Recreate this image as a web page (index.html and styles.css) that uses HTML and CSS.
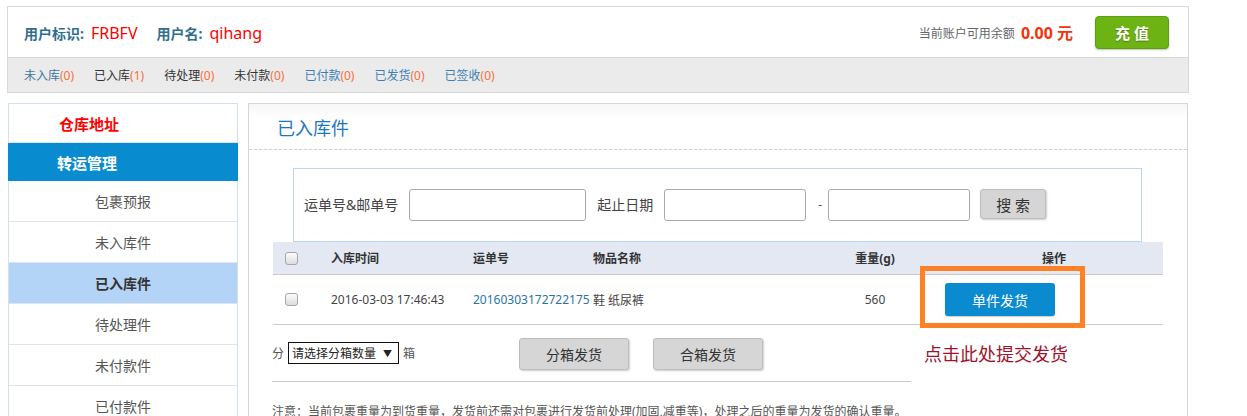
FILE: index.html
```html
<!DOCTYPE html>
<html lang="zh-CN">
<head>
<meta charset="utf-8">
<title>已入库件</title>
<link rel="stylesheet" href="styles.css">
</head>
<body>
<div class="page">
  <header class="account">
    <div class="account-top">
      <div class="user">
        <span class="lbl">用户标识:</span><span class="val">FRBFV</span>
        <span class="lbl lbl2">用户名:</span><span class="val">qihang</span>
      </div>
      <div class="balance">
        <span class="bal-lbl">当前账户可用余额</span>
        <span class="bal-val">0.00 元</span>
        <button class="recharge">充 值</button>
      </div>
    </div>
    <nav class="status-nav">
      <a class="st st-teal">未入库<em>(0)</em></a>
      <a class="st st-dark">已入库<em>(1)</em></a>
      <a class="st st-dark">待处理<em>(0)</em></a>
      <a class="st st-dark">未付款<em>(0)</em></a>
      <a class="st st-blue">已付款<em>(0)</em></a>
      <a class="st st-blue">已发货<em>(0)</em></a>
      <a class="st st-blue">已签收<em>(0)</em></a>
    </nav>
  </header>

  <div class="body">
    <aside class="side">
      <div class="side-title">仓库地址</div>
      <div class="side-group">转运管理</div>
      <div class="side-item">包裹预报</div>
      <div class="side-item">未入库件</div>
      <div class="side-item active">已入库件</div>
      <div class="side-item">待处理件</div>
      <div class="side-item">未付款件</div>
      <div class="side-item">已付款件</div>
    </aside>

    <main class="panel">
      <h2 class="panel-title">已入库件</h2>
      <div class="panel-body">
        <div class="search">
          <span class="s-lbl">运单号&amp;邮单号</span>
          <input class="s-input s-wide" type="text">
          <span class="s-lbl">起止日期</span>
          <input class="s-input s-date" type="text">
          <span class="s-dash">-</span>
          <input class="s-input s-date" type="text">
          <button class="s-btn">搜 索</button>
        </div>

        <div class="grid grid-head">
          <div class="c1"><input type="checkbox" class="cb"></div>
          <div>入库时间</div>
          <div>运单号</div>
          <div>物品名称</div>
          <div class="c5">重量(g)</div>
          <div class="c6h">操作</div>
        </div>
        <div class="grid grid-row">
          <div class="c1"><input type="checkbox" class="cb"></div>
          <div>2016-03-03 17:46:43</div>
          <div class="track">20160303172722175</div>
          <div>鞋 纸尿裤</div>
          <div class="c5">560</div>
          <div class="c6"><button class="ship-btn">单件发货</button></div>
        </div>

        <div class="ops">
          <span class="ops-txt">分</span>
          <span class="sel-wrap"><select class="sel"><option>请选择分箱数量</option></select></span>
          <span class="ops-txt">箱</span>
          <button class="ops-btn ops-first">分箱发货</button>
          <button class="ops-btn">合箱发货</button>
        </div>

        <p class="note">注意：当前包裹重量为到货重量，发货前还需对包裹进行发货前处理(加固,减重等)，处理之后的重量为发货的确认重量。</p>
      </div>

      <div class="mark-box"></div>
      <div class="mark-text">点击此处提交发货</div>
    </main>
  </div>
</div>
</body>
</html>
```

FILE: styles.css
```css
* { box-sizing: border-box; }

html, body {
  margin: 0;
  padding: 0;
  background: #fff;
}

body {
  font-family: "Noto Sans", "Noto Sans CJK SC", sans-serif;
  font-size: 12px;
  color: #333;
  overflow: hidden;
}

.page {
  width: 1189px;
  padding: 6px 0 0 7px;
}

/* ---------- account header ---------- */
.account {
  border: 1px solid #d8d8d8;
}

.account-top {
  height: 50px;
  display: flex;
  align-items: center;
  justify-content: space-between;
  padding: 0 19px 0 16px;
}

.user {
  display: flex;
  align-items: center;
  margin-top: 2px;
}

.lbl {
  font-size: 14px;
  font-weight: bold;
  color: #2f6f8e;
  margin-right: 7px;
}

.lbl2 { margin-left: 19px; }

.val {
  font-size: 16px;
  color: #f00;
}

.balance {
  display: flex;
  align-items: center;
}

.bal-lbl {
  font-size: 12px;
  color: #666;
  margin-top: 2px;
}

.bal-val {
  font-size: 16px;
  font-weight: bold;
  color: #f7300a;
  margin-left: 6px;
  margin-right: 22px;
}

.recharge {
  width: 74px;
  height: 33px;
  margin-top: 1px;
  background: #6cb313;
  border: 1px solid #5d9e10;
  border-radius: 4px;
  box-shadow: 0 1px 2px rgba(0, 0, 0, 0.25);
  color: #fff;
  font-family: inherit;
  font-size: 15px;
  font-weight: bold;
  text-shadow: 0 1px 1px rgba(0, 0, 0, 0.3);
  padding: 0;
}

.status-nav {
  height: 35px;
  border-top: 1px solid #d8d8d8;
  background: #ebebeb;
  display: flex;
  align-items: center;
  gap: 20px;
  padding-left: 16px;
}

.st {
  font-size: 12px;
}

.st em {
  font-style: normal;
  color: #f7703a;
}

.st-teal { color: #3a7c9c; }
.st-dark { color: #333; }
.st-blue { color: #3b80b2; }

/* ---------- body ---------- */
.body {
  display: flex;
  align-items: flex-start;
  margin-top: 10px;
}

.side {
  width: 230px;
  margin-left: 1px;
  border: 1px solid #d3e1ee;
  border-bottom: none;
}

.side-title {
  height: 39px;
  padding-left: 50px;
  display: flex;
  align-items: center;
  font-size: 15px;
  font-weight: bold;
  color: #f00;
  border-bottom: 1px solid #dde5ec;
}

.side-group {
  height: 38px;
  margin: 0 -1px;
  padding-left: 49px;
  display: flex;
  align-items: center;
  background: #088bcf;
  color: #fff;
  font-size: 15px;
  font-weight: bold;
}

.side-item {
  height: 41px;
  padding-left: 86px;
  display: flex;
  align-items: center;
  font-size: 14px;
  color: #555;
  border-bottom: 1px solid #dde5ec;
}

.side-item.active {
  background: #b3d4f6;
  color: #333;
  font-weight: bold;
}

/* ---------- main panel ---------- */
.panel {
  position: relative;
  width: 940px;
  margin-left: 10px;
  border: 1px solid #d6d6d6;
  border-bottom: none;
  min-height: 320px;
}

.panel-title {
  margin: 0;
  height: 46px;
  padding: 0 0 0 28px;
  display: flex;
  align-items: center;
  font-size: 18px;
  font-weight: normal;
  color: #1d77bf;
  border-bottom: 1px dashed #cfcfcf;
  background: linear-gradient(#f6f6f6, #fff 14px);
}

.panel-body {
  padding: 18px 24px 0;
}

.search {
  height: 74px;
  margin: 0 21px 0 20px;
  border: 1px solid #b9d7ef;
  display: flex;
  align-items: flex-start;
  padding: 20px 0 0 10px;
}

.s-lbl {
  font-size: 14px;
  color: #444;
  line-height: 32px;
  margin-right: 11px;
}

.s-input {
  height: 32px;
  border: 1px solid #aaa;
  border-radius: 3px;
  background: #fff;
  margin: 0 11px 0 0;
  padding: 0 4px;
}

.s-wide { width: 177px; }
.s-date { width: 142px; }

.s-dash {
  line-height: 32px;
  color: #555;
  margin: 0 6px 0 1px;
}

.s-btn {
  width: 66px;
  height: 30px;
  margin-left: -1px;
  background: #d5d5d5;
  border: 1px solid #bdbdbd;
  border-radius: 3px;
  box-shadow: 1px 1px 2px rgba(0, 0, 0, 0.2);
  font-family: inherit;
  font-size: 15px;
  color: #333;
  padding: 0;
}

.grid {
  display: grid;
  grid-template-columns: 58px 142px 120px 231px 102px 1fr;
  align-items: center;
  border-bottom: 1px solid #cbcbcb;
}

.grid-head {
  height: 33px;
  background: #e3e8f3;
  font-weight: bold;
  color: #333;
}

.grid-row {
  height: 50px;
  color: #444;
}

.c1 {
  padding-left: 12px;
  display: flex;
  align-items: center;
}

.cb {
  -webkit-appearance: none;
  appearance: none;
  width: 13px;
  height: 13px;
  margin: 0;
  border: 1px solid #a6a6a6;
  border-radius: 3px;
  background: linear-gradient(#fdfdfd, #dcdcdc);
}

.track {
  color: #2a73a6;
  white-space: nowrap;
}

.c5 { text-align: center; }

.c6h { padding-left: 116px; }

.c6 { padding-left: 19px; }

.ship-btn {
  width: 110px;
  height: 33px;
  background: #0a8bcf;
  border: none;
  border-radius: 3px;
  box-shadow: 0 1px 1px rgba(0, 0, 0, 0.2);
  color: #fff;
  font-family: inherit;
  font-size: 14px;
  padding: 0;
}

.ops {
  width: 639px;
  height: 57px;
  display: flex;
  align-items: center;
  border-bottom: 1px solid #cbcbcb;
  margin-left: -1px;
}

.ops-txt {
  font-size: 12px;
  color: #555;
}

.sel-wrap {
  position: relative;
  margin: 0 4px;
  display: inline-flex;
}

.sel-wrap::after {
  content: "▼";
  position: absolute;
  right: 7px;
  top: 5px;
  font-size: 9px;
  color: #222;
  pointer-events: none;
}

.sel {
  -webkit-appearance: none;
  appearance: none;
  width: 111px;
  height: 22px;
  border: 1px solid #111;
  border-radius: 0;
  background: #fff;
  font-family: inherit;
  font-size: 12px;
  color: #222;
  padding: 0 0 0 3px;
}

.ops-btn {
  width: 110px;
  height: 32px;
  margin-left: 24px;
  margin-top: 2px;
  background: #d6d6d6;
  border: 1px solid #bdbdbd;
  border-radius: 3px;
  box-shadow: 1px 1px 2px rgba(0, 0, 0, 0.2);
  font-family: inherit;
  font-size: 14px;
  color: #333;
  padding: 0;
}

.ops-first { margin-left: 104px; }

.note {
  margin: 20px 0 0 -1px;
  font-size: 12px;
  color: #555;
  white-space: nowrap;
}

/* ---------- annotation overlays ---------- */
.mark-box {
  position: absolute;
  left: 671px;
  top: 162px;
  width: 165px;
  height: 62px;
  border: 5px solid #ff8126;
}

.mark-text {
  position: absolute;
  left: 675px;
  top: 238px;
  font-size: 18px;
  line-height: 24px;
  color: #a3102c;
  white-space: nowrap;
}
```
